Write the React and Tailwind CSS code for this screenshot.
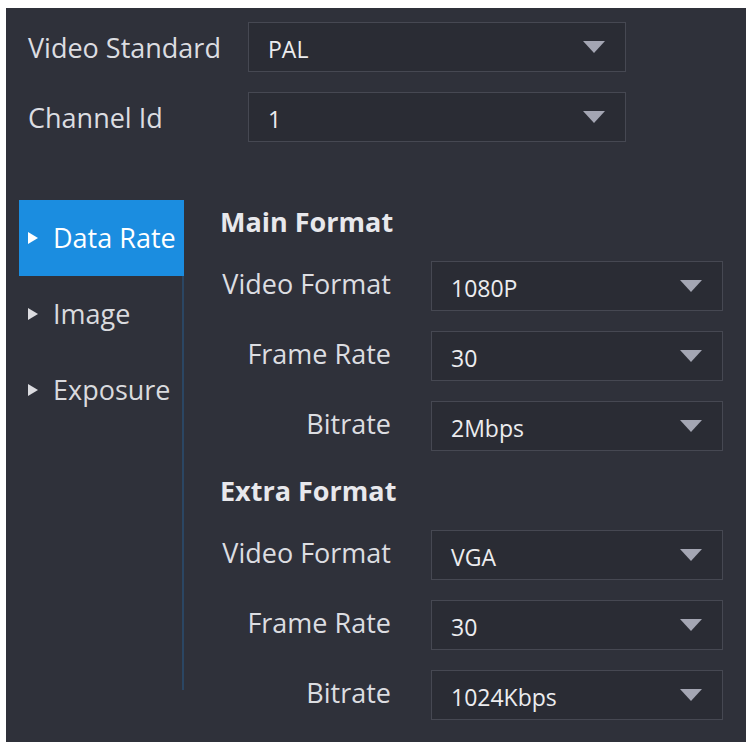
// App.jsx — camera video settings panel (dark theme).

const FONT = { fontFamily: '"Open Sans", "Noto Sans", sans-serif' };

const SECTIONS = [
  {
    title: 'Main Format',
    rows: [
      { label: 'Video Format', value: '1080P' },
      { label: 'Frame Rate',   value: '30' },
      { label: 'Bitrate',      value: '2Mbps' },
    ],
  },
  {
    title: 'Extra Format',
    rows: [
      { label: 'Video Format', value: 'VGA' },
      { label: 'Frame Rate',   value: '30' },
      { label: 'Bitrate',      value: '1024Kbps' },
    ],
  },
];

const MENU = ['Data Rate', 'Image', 'Exposure'];

// ── Pieces ────────────────────────────────────────────────────────────────────

function Caret() {
  return (
    <svg width="22" height="12" viewBox="0 0 22 12" aria-hidden="true">
      <path d="M0 0 H22 L11 12 Z" fill="#a4a6b3" />
    </svg>
  );
}

function Select({ value, width }) {
  return (
    <div
      className={`flex h-[50px] items-center justify-between border border-[#464852] bg-[#2a2c34] pl-[19px] pr-[20px] ${width}`}
    >
      <span className="pt-[4px] text-[23px] leading-none text-[#ececef]">{value}</span>
      <Caret />
    </div>
  );
}

function MenuItem({ label, active }) {
  return (
    <div
      className={`flex h-[76px] items-center gap-[15px] pl-[9px] text-[27px] ${
        active ? '-mr-[2px] bg-[#1b8de0] text-white' : 'text-[#d9dade]'
      }`}
    >
      <svg width="10" height="12" viewBox="0 0 10 12" aria-hidden="true">
        <path d="M0 0 L10 6 L0 12 Z" fill={active ? '#ffffff' : '#dcdce0'} />
      </svg>
      <span className="pb-[2px] leading-none">{label}</span>
    </div>
  );
}

// ── Page ─────────────────────────────────────────────────────────────────────

export default function App() {
  return (
    <div className="h-[748px] w-[751px] bg-white pl-[6px] pt-[8px]" style={FONT}>
      <div className="h-[734px] w-[740px] bg-[#2f313a] pt-[14px]">
        {/* Top fields */}
        <div className="flex flex-col gap-[20px]">
          {[
            { label: 'Video Standard', value: 'PAL' },
            { label: 'Channel Id',     value: '1' },
          ].map(f => (
            <div key={f.label} className="flex items-center">
              <span className="w-[242px] pl-[22px] text-[27px] leading-none text-[#dcdde1]">{f.label}</span>
              <Select value={f.value} width="w-[378px]" />
            </div>
          ))}
        </div>

        <div className="mt-[58px] flex">
          {/* Side menu */}
          <div className="ml-[13px] h-[490px] w-[165px] border-r-2 border-[#2b4663]">
            {MENU.map((m, i) => (
              <MenuItem key={m} label={m} active={i === 0} />
            ))}
          </div>

          {/* Format settings */}
          <div className="ml-[36px] flex flex-col">
            {SECTIONS.map((s, si) => (
              <div key={s.title} className={si ? 'mt-[18px]' : ''}>
                <div className="h-[44px] text-[27px] font-bold leading-[44px] text-[#e8e8ec]">
                  {s.title}
                </div>
                <div className="mt-[17px] flex flex-col gap-[20px]">
                  {s.rows.map(r => (
                    <div key={r.label} className="flex items-center">
                      <span className="w-[171px] whitespace-nowrap pb-[6px] text-right text-[27px] leading-none text-[#dcdde1]">
                        {r.label}
                      </span>
                      <div className="ml-[40px]">
                        <Select value={r.value} width="w-[292px]" />
                      </div>
                    </div>
                  ))}
                </div>
              </div>
            ))}
          </div>
        </div>
      </div>
    </div>
  );
}
